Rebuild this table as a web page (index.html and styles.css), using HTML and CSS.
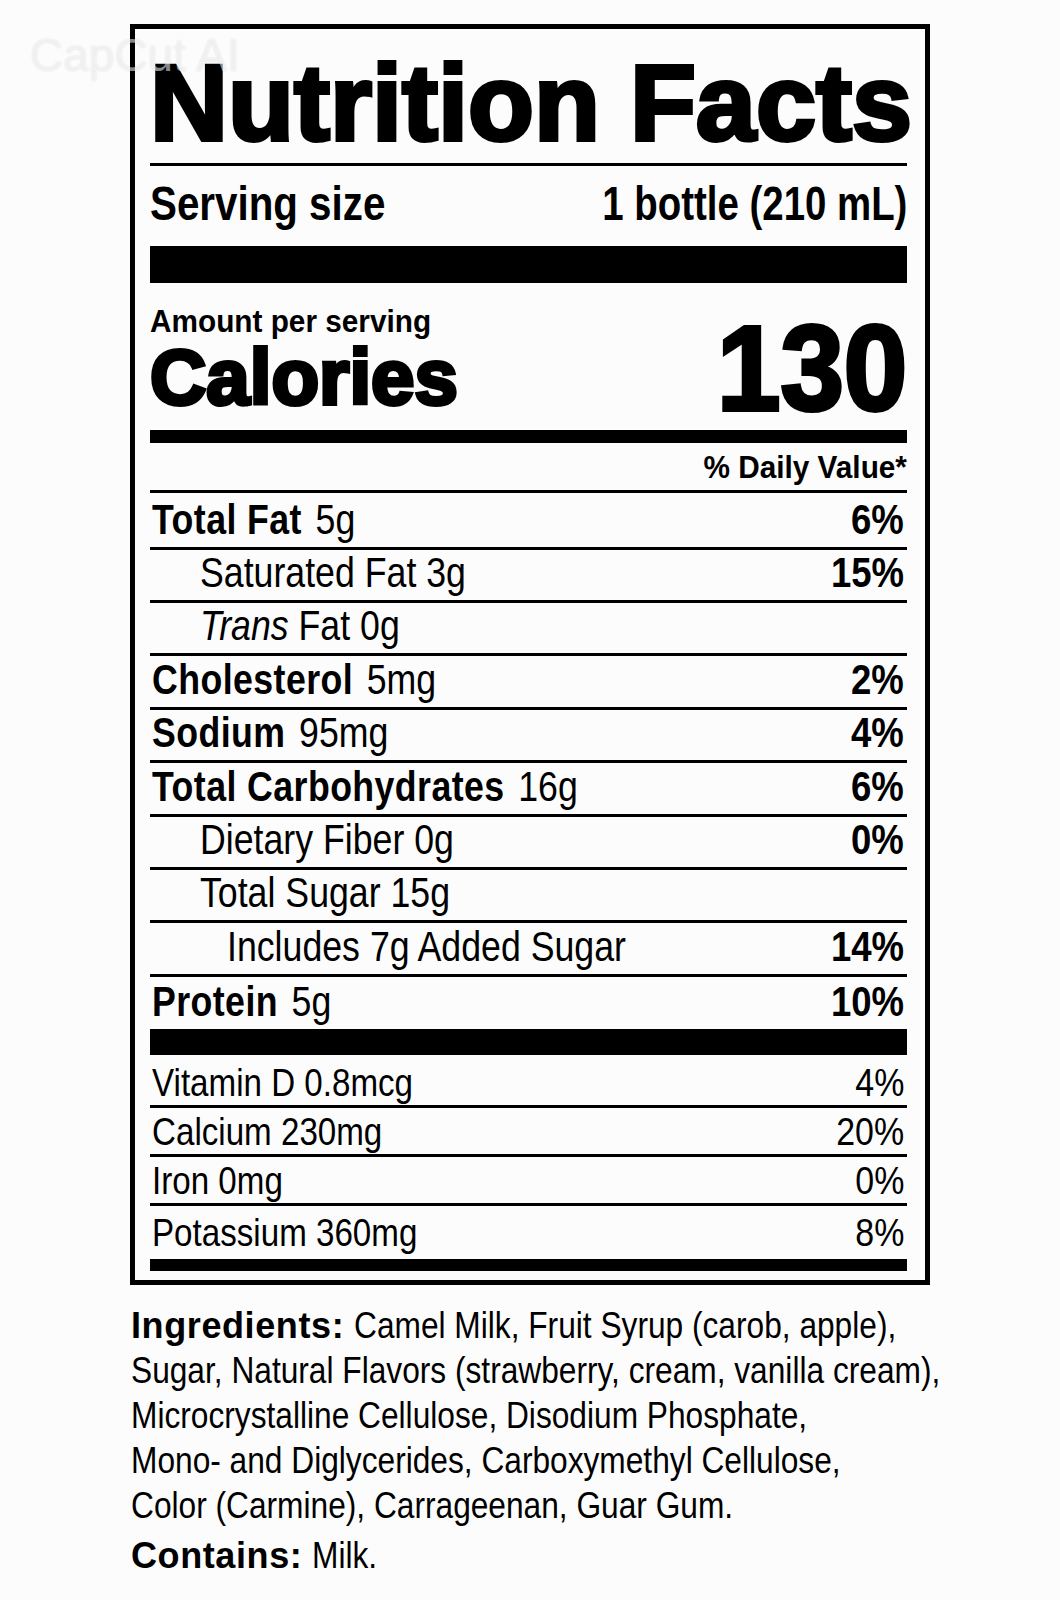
FILE: index.html
```html
<!DOCTYPE html>
<html lang="en">
<head>
<meta charset="utf-8">
<title>Nutrition Facts</title>
<link rel="stylesheet" href="styles.css">
</head>
<body>
<div class="page">
  <div class="watermark">CapCut AI</div>
  <div class="label">
    <div class="title">Nutrition Facts</div>
    <div class="serving">
      <span class="sv-l">Serving size</span>
      <span class="sv-r">1 bottle (210 mL)</span>
    </div>
    <div class="bar bar-xl"></div>
    <div class="cal">
      <div class="cal-left">
        <div class="amount"><span>Amount per serving</span></div>
        <div class="calories">Calories</div>
      </div>
      <div class="cal-num">130</div>
    </div>
    <div class="bar bar-md"></div>
    <div class="dv"><span>% Daily Value*</span></div>
    <div class="rows">
      <div class="row first"><span class="l"><b>Total Fat</b>5g</span><span class="r">6%</span></div>
      <div class="row i1"><span class="l">Saturated Fat 3g</span><span class="r">15%</span></div>
      <div class="row i1"><span class="l"><i>Trans</i> Fat 0g</span><span class="r"></span></div>
      <div class="row"><span class="l"><b>Cholesterol</b>5mg</span><span class="r">2%</span></div>
      <div class="row"><span class="l"><b>Sodium</b>95mg</span><span class="r">4%</span></div>
      <div class="row"><span class="l"><b>Total Carbohydrates</b>16g</span><span class="r">6%</span></div>
      <div class="row i1"><span class="l">Dietary Fiber 0g</span><span class="r">0%</span></div>
      <div class="row i1"><span class="l">Total Sugar 15g</span><span class="r"></span></div>
      <div class="row i2"><span class="l">Includes 7g Added Sugar</span><span class="r">14%</span></div>
      <div class="row last"><span class="l"><b>Protein</b>5g</span><span class="r">10%</span></div>
    </div>
    <div class="bar bar-lg"></div>
    <div class="vits">
      <div class="vrow"><span class="l">Vitamin D 0.8mcg</span><span class="r">4%</span></div>
      <div class="vrow"><span class="l">Calcium 230mg</span><span class="r">20%</span></div>
      <div class="vrow"><span class="l">Iron 0mg</span><span class="r">0%</span></div>
      <div class="vrow"><span class="l">Potassium 360mg</span><span class="r">8%</span></div>
    </div>
    <div class="bar bar-sm"></div>
  </div>
  <p class="ingr"><b>Ingredients:</b> <span class="ln">Camel Milk, Fruit Syrup (carob, apple),</span><br><span class="ln">Sugar, Natural Flavors (strawberry, cream, vanilla cream),</span><br><span class="ln">Microcrystalline Cellulose, Disodium Phosphate,</span><br><span class="ln">Mono- and Diglycerides, Carboxymethyl Cellulose,</span><br><span class="ln">Color (Carmine), Carrageenan, Guar Gum.</span></p>
  <p class="contains"><b>Contains:</b> <span class="ln">Milk.</span></p>
</div>
</body>
</html>
```
FILE: styles.css
```css
html, body {
  margin: 0;
  padding: 0;
  background: #fcfcfc;
  overflow: hidden;
}

body {
  font-family: "Liberation Sans", Arial, sans-serif;
  color: #000;
}

.page {
  position: relative;
  padding: 24px 0 0 130px;
}

.watermark {
  position: absolute;
  left: 30px;
  top: 30px;
  font-size: 46px;
  line-height: 50px;
  color: rgba(255, 255, 255, 0.55);
  text-shadow: 0 0 2px rgba(0, 0, 0, 0.12);
  white-space: nowrap;
  z-index: 2;
}

.label {
  width: 800px;
  box-sizing: border-box;
  border: 5px solid #000;
  padding: 0 18px 9px 15px;
}

.title {
  font-size: 108px;
  line-height: 108px;
  font-weight: 700;
  -webkit-text-stroke: 4px #000;
  white-space: nowrap;
  padding: 19.6px 0 6.4px;
  border-bottom: 3px solid #000;
}

.serving {
  display: flex;
  justify-content: space-between;
  align-items: flex-end;
  font-size: 48px;
  line-height: 48px;
  font-weight: 700;
  padding: 14.4px 0 17.6px;
  white-space: nowrap;
}

.sv-l {
  transform: scaleX(0.84);
  transform-origin: left bottom;
}

.sv-r {
  transform: scaleX(0.8);
  transform-origin: right bottom;
}

.bar {
  background: #000;
}

.bar-xl { height: 37px; }
.bar-md { height: 13px; }
.bar-lg { height: 26px; }
.bar-sm { height: 12px; }

.cal {
  display: flex;
  justify-content: space-between;
  align-items: flex-end;
  font-weight: 700;
}

.cal-left {
  padding: 23.2px 0 14px;
}

.amount {
  font-size: 31px;
  line-height: 32px;
  white-space: nowrap;
}

.amount span {
  display: inline-block;
  transform: scaleX(0.96);
  transform-origin: left bottom;
}

.calories {
  margin-top: 0;
  font-size: 78px;
  line-height: 78px;
  -webkit-text-stroke: 4px #000;
}

.cal-num {
  font-size: 120px;
  line-height: 120px;
  -webkit-text-stroke: 4px #000;
  padding-bottom: 2.6px;
  transform: scaleX(0.95);
  transform-origin: right bottom;
}

.dv {
  text-align: right;
  font-size: 31px;
  line-height: 31px;
  font-weight: 700;
  padding: 8.7px 0 7.3px;
  white-space: nowrap;
}

.dv span {
  display: inline-block;
  transform: scaleX(0.96);
  transform-origin: right bottom;
}

.row {
  display: flex;
  justify-content: space-between;
  align-items: flex-end;
  box-sizing: border-box;
  height: 53.4px;
  border-top: 3px solid #000;
  padding: 0 3px 6px 2px;
  font-size: 42px;
  line-height: 42px;
  white-space: nowrap;
}

.row.first { height: 56.5px; }
.row.last { height: 55.1px; }

.row .l,
.vrow .l {
  transform: scaleX(0.85);
  transform-origin: left bottom;
}

.row .l b {
  letter-spacing: 0.5px;
  margin-right: 16px;
}

.row .r,
.vrow .r {
  transform: scaleX(0.87);
  transform-origin: right bottom;
}

.row .r {
  font-weight: 700;
}

.row.i1 .l { margin-left: 48px; }
.row.i2 .l { margin-left: 75px; }

.vits {
  padding: 4px 0;
}

.vrow {
  display: flex;
  justify-content: space-between;
  align-items: flex-end;
  box-sizing: border-box;
  height: 49px;
  border-bottom: 3px solid #000;
  padding: 0 3px 3px 2px;
  font-size: 39px;
  line-height: 39px;
  white-space: nowrap;
}

.vrow:last-child {
  border-bottom: none;
}

.ingr,
.contains {
  margin: 18px 0 0 1px;
  font-size: 36px;
  line-height: 45px;
  white-space: nowrap;
}

.ingr b,
.contains b {
  letter-spacing: 0.6px;
}

.contains {
  margin-top: 4.7px;
}

.ln {
  display: inline-block;
  transform: scaleX(0.88);
  transform-origin: left bottom;
}
```
